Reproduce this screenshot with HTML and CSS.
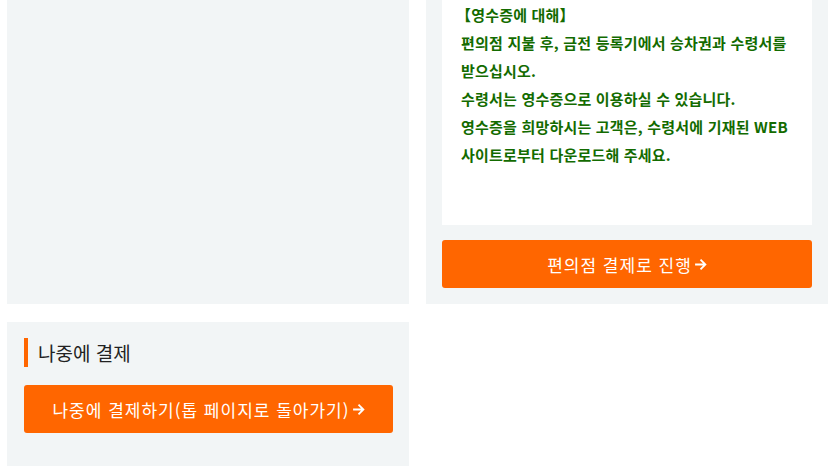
FILE: index.html
```html
<!DOCTYPE html>
<html lang="ko">
  <head>
    <meta charset="UTF-8" />
    <meta name="viewport" content="width=device-width, initial-scale=1.0" />
    <title>결제 방법 선택</title>
    <link rel="stylesheet" href="styles.css">
  </head>
  <body>
    <div class="payment-grid">
      <div class="panel"></div>

      <div class="panel panel-store">
        <div class="receipt-info">
          <p class="receipt-heading">【영수증에 대해】</p>
          <p>편의점 지불 후, 금전 등록기에서 승차권과 수령서를 받으십시오.</p>
          <p>수령서는 영수증으로 이용하실 수 있습니다.</p>
          <p>영수증을 희망하시는 고객은, 수령서에 기재된 WEB 사이트로부터 다운로드해 주세요.</p>
        </div>
        <a href="#" class="pay-button">편의점 결제로 진행<svg class="arrow" viewBox="0 0 12 12"><path d="M1 6h9.5M6 1.5 10.5 6 6 10.5" /></svg></a>
      </div>

      <div class="panel panel-later">
        <h2 class="panel-title">나중에 결제</h2>
        <a href="#" class="pay-button">나중에 결제하기(톱 페이지로 돌아가기)<svg class="arrow" viewBox="0 0 12 12"><path d="M1 6h9.5M6 1.5 10.5 6 6 10.5" /></svg></a>
      </div>
    </div>
  </body>
</html>
```

FILE: styles.css
```css
body {
  font-family: "Noto Sans CJK KR", "Noto Sans", sans-serif;
  background-color: #fff;
  margin: 0;
  color: #222;
}
.payment-grid {
  display: grid;
  grid-template-columns: 402px 402px;
  column-gap: 17px;
  row-gap: 18px;
  padding: 0 6px 0 7px;
}
.panel {
  background: #f2f5f6;
}
.panel-store {
  padding: 0 16px 16px;
}
.receipt-info {
  background: #fff;
  padding: 1px 19px 56px;
  color: #136b00;
  font-size: 15px;
  font-weight: bold;
  line-height: 28px;
  letter-spacing: 0.2px;
}
.receipt-info p {
  margin: 0;
}
.receipt-heading {
  text-indent: -5px;
}
.pay-button {
  display: flex;
  align-items: center;
  justify-content: center;
  height: 48px;
  margin-top: 15px;
  background-color: #ff6600;
  color: #fff;
  font-size: 17px;
  letter-spacing: 1px;
  text-decoration: none;
  border-radius: 3px;
}
.arrow {
  width: 13px;
  height: 13px;
  margin-left: 2px;
  fill: none;
  stroke: #fff;
  stroke-width: 1.7;
}
.panel-later {
  padding: 16px 16px 33px 17px;
}
.panel-title {
  margin: 0;
  padding-left: 10px;
  border-left: 4px solid #ff6600;
  font-size: 19px;
  font-weight: normal;
  line-height: 29px;
}
.panel-later .pay-button {
  margin-top: 18px;
}
```
